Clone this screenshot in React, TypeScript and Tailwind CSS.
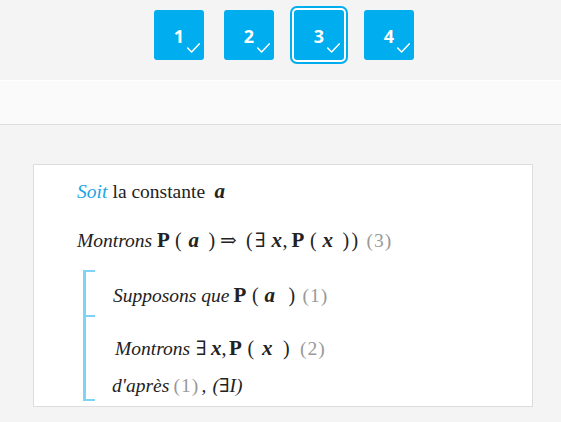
import { Fragment } from "react";

function Check() {
  return (
    <svg className="absolute left-[33px] top-[33px]" width="13" height="10" viewBox="0 0 13 10" fill="none">
      <polyline points="0.7,5 4.6,9 12.4,0.8" stroke="white" strokeWidth="1.5" strokeLinecap="round" strokeLinejoin="round" />
    </svg>
  );
}

function StepButton({ n, active }: { n: number; active?: boolean }) {
  return (
    <div
      className={`relative w-[50px] h-[50px] rounded-[3px] bg-[#00adef] flex items-center justify-center pt-[2px] text-white text-[18px] font-bold font-['Open_Sans',sans-serif] ${
        active ? "ring-2 ring-[#00adef] ring-offset-2 ring-offset-white" : ""
      }`}
    >
      {n}
      <Check />
    </div>
  );
}

const P = ({ className }: { className: string }) => (
  <span className={`inline-block font-bold text-[21px] ${className}`}>P</span>
);
const V = ({ c, className }: { c: string; className: string }) => (
  <span className={`inline-block font-bold italic text-[21px] ${className}`}>{c}</span>
);
const Op = ({ c, className }: { c: string; className: string }) => (
  <span className={`inline-block text-[20px] ${className}`}>{c}</span>
);
const Ref = ({ c, className = "" }: { c: string; className?: string }) => (
  <span className={`inline-block text-[#999] tracking-[1px] ${className}`}>{c}</span>
);

export default function App() {
  return (
    <div className="min-h-[422px] bg-[#f4f4f4] font-['Liberation_Serif','DejaVu_Serif',serif]">
      <div className="h-[80px] flex gap-[20px] pl-[154px] pt-[10px]">
        {[1, 2, 3, 4].map((n) => (
          <Fragment key={n}>
            <StepButton n={n} active={n === 3} />
          </Fragment>
        ))}
      </div>
      <div className="h-[45px] border-t border-b border-t-white border-b-[#dddddd] bg-[#fafafa]" />

      <div className="mt-[39px] ml-[33px] w-[500px] border border-[#dddddd] bg-white pl-[43px] pt-[14px] pb-[5px] text-[19.5px] leading-[24px] text-[#222]">
        {/* Soit la constante a */}
        <div className="h-[24px] whitespace-nowrap">
          <span className="inline-block w-[35.5px] italic text-[#1ea4e1]">Soit</span>
          <span className="inline-block w-[102px]">la constante</span>
          <V c="a" className="" />
        </div>

        {/* Montrons P(a) => (Ex, P(x)) */}
        <div className="mt-[25px] h-[24px] whitespace-nowrap">
          <span className="inline-block w-[80px] italic">Montrons</span>
          <P className="w-[18px]" />
          <Op c="(" className="w-[13.5px]" />
          <V c="a" className="w-[20px]" />
          <Op c=")" className="w-[11.5px]" />
          <Op c="⇒" className="w-[26px]" />
          <Op c="(" className="w-[9px]" />
          <Op c="∃" className="w-[16.5px]" />
          <V c="x" className="w-[11px]" />
          <Op c="," className="w-[9px]" />
          <P className="w-[18.5px]" />
          <Op c="(" className="w-[12.5px]" />
          <V c="x" className="w-[20px]" />
          <Op c=")" className="w-[9px]" />
          <Op c=")" className="w-[15px]" />
          <Ref c="(3)" />
        </div>

        {/* sous-preuve */}
        <div className="mt-[18px] ml-[6px] flex">
          <div className="w-[3px] bg-[#7fd3f5]" />
          <div>
            <div className="w-[9px] h-[2px] bg-[#7fd3f5]" />
            <div className="mt-[11px] h-[24px] pl-[27px] whitespace-nowrap">
              <span className="inline-block w-[120.5px] italic">Supposons que</span>
              <P className="w-[18.5px]" />
              <Op c="(" className="w-[12.5px]" />
              <V c="a" className="w-[24px]" />
              <Op c=")" className="w-[14px]" />
              <Ref c="(1)" />
            </div>
            <div className="mt-[8px] w-[9px] h-[2px] bg-[#7fd3f5]" />
            <div className="mt-[19px] h-[24px] pl-[29px] whitespace-nowrap">
              <span className="inline-block w-[81px] italic">Montrons</span>
              <Op c="∃" className="w-[15px]" />
              <V c="x" className="w-[10.5px]" />
              <Op c="," className="w-[7.5px]" />
              <P className="w-[18.5px]" />
              <Op c="(" className="w-[14.5px]" />
              <V c="x" className="w-[21px]" />
              <Op c=")" className="w-[17px]" />
              <Ref c="(2)" />
            </div>
            <div className="mt-[14px] h-[24px] pl-[26px] whitespace-nowrap">
              <span className="inline-block w-[61.5px] italic">d'après</span>
              <Ref c="(1)" className="w-[28px]" />
              <span className="inline-block w-[11px] italic">,</span>
              <span className="inline-block italic">(∃I)</span>
            </div>
            <div className="mt-[1px] w-[9px] h-[2px] bg-[#7fd3f5]" />
          </div>
        </div>
      </div>
    </div>
  );
}
